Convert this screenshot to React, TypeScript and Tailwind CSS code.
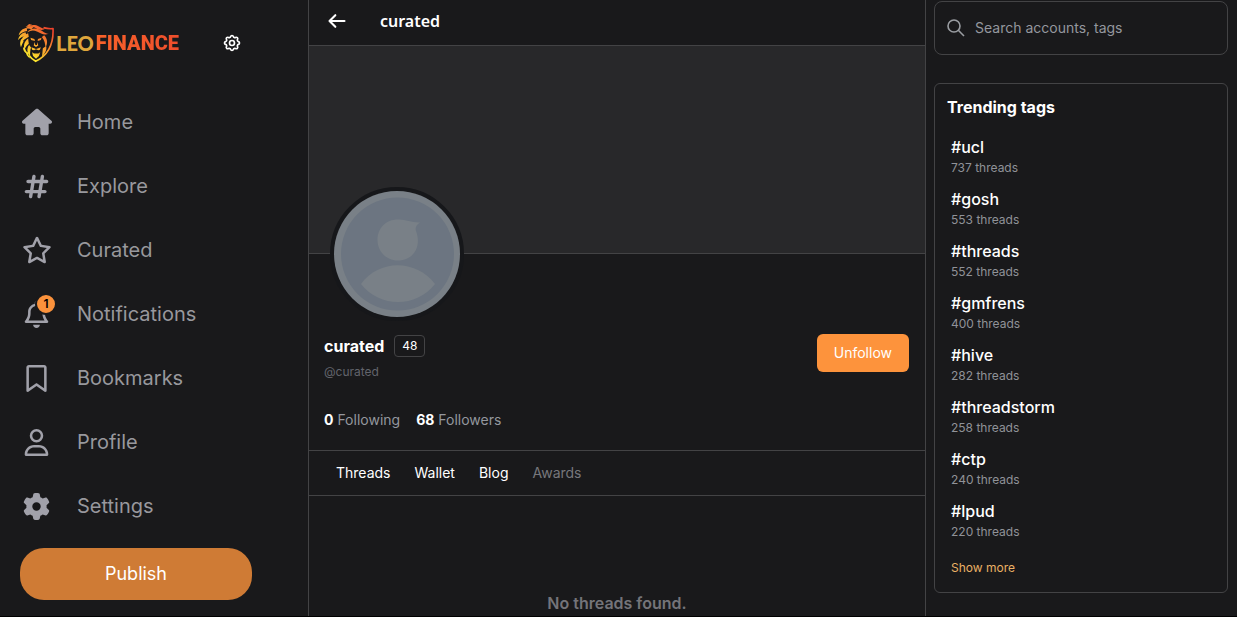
import type { ReactNode } from "react";
import { FaGear, FaHashtag, FaHouse, FaRegBell, FaRegBookmark, FaRegStar, FaRegUser } from "react-icons/fa6";
import { HiOutlineArrowLeft, HiOutlineCog } from "react-icons/hi";

const navItems: { label: string; icon: ReactNode; badge?: number }[] = [
  { label: "Home", icon: <FaHouse className="size-[30px]" /> },
  { label: "Explore", icon: <FaHashtag /> },
  { label: "Curated", icon: <FaRegStar className="size-[30px]" /> },
  { label: "Notifications", icon: <FaRegBell />, badge: 1 },
  { label: "Bookmarks", icon: <FaRegBookmark /> },
  { label: "Profile", icon: <FaRegUser /> },
  { label: "Settings", icon: <FaGear /> },
];

const tags = [
  { name: "ucl", threads: 737 },
  { name: "gosh", threads: 553 },
  { name: "threads", threads: 552 },
  { name: "gmfrens", threads: 400 },
  { name: "hive", threads: 282 },
  { name: "threadstorm", threads: 258 },
  { name: "ctp", threads: 240 },
  { name: "lpud", threads: 220 },
];

const LionMark = () => (
  <svg className="h-10 w-9" viewBox="0 0 110 118" fill="none" aria-hidden="true">
    <defs>
      <linearGradient id="lion" x1="88" y1="8" x2="22" y2="88" gradientUnits="userSpaceOnUse">
        <stop offset="0" stopColor="#f0432c" />
        <stop offset="0.5" stopColor="#f7942f" />
        <stop offset="1" stopColor="#fbe42c" />
      </linearGradient>
    </defs>
    <path
      stroke="url(#lion)"
      strokeWidth="5"
      strokeLinejoin="round"
      d="M78 12c10 3 19 4 29 3 2 43-13 80-53 100-9-5-15-11-20-18"
    />
    <g fill="url(#lion)">
      <path d="M94 31C82 31 76 23 66 18 52 11 36 14 28 27 38 20 48 19 58 24 70 30 80 37 94 31Z" />
      <path d="M84 15C72 16 66 8 56 5 46 2 36 4 28 11 40 8 48 10 55 14 64 19 76 22 84 15Z" />
      <path d="M48 9C38 6 27 8 20 17 27 14 34 14 41 17ZM34 1C30 5 28 7 23 10 31 9 38 7 43 3Z" />
      <path d="M27 14C14 14 5 22 2 36 9 27 17 24 28 22ZM23 26C9 29 3 38 0 50 8 41 15 38 26 37Z" />
      <path d="M31 29C17 34 10 45 9 60 16 50 22 46 33 40ZM11 46C6 53 5 62 9 72 12 64 14 60 17 54Z" />
      <path d="M31 45C20 53 16 65 20 79 24 71 27 66 33 61ZM15 72C15 81 20 88 28 92 25 84 23 79 21 75Z" />
      <path d="M34 65C26 76 27 88 37 99 37 89 37 80 40 73ZM25 84C23 93 28 101 37 106 33 98 31 92 30 88Z" />
      <path d="M80 35C90 46 92 58 84 73 83 63 82 52 73 41ZM86 68C89 80 83 90 73 101 75 90 75 82 76 75Z" />
      <path d="M38 43l12 4 2 6-12-3zM72 43l-11 4-1 6 10-3zM51 56l-3 11 7 4 7-4-3-11-1 9h-5z" />
      <path d="M41 72l8 3 6 2 7-2 8-3-3 8-5 1-7-3-6 3-6-1z" />
      <path d="M43 87l6 4h13l6-4-4 12-9 8-9-8z" />
    </g>
  </svg>
);

const Avatar = () => (
  <svg className="size-full" viewBox="0 0 126 126" role="img" aria-label="curated">
    <circle cx="63" cy="63" r="63" fill="#798087" />
    <circle cx="63.5" cy="63" r="56.5" fill="#6c7581" />
    <path
      fill="#798087"
      d="M64 28.500C71 28 78 32 86 31.500C82 34 81 37 82 40C88 56 79 69.500 64 69.500C52 69.500 43.500 60 43.500 49C43.500 37 52 28.500 64 28.500Z"
    />
    <path fill="#798087" d="M27 93C45 68 82 68 101 93C82 117 46 117 27 93Z" />
  </svg>
);

const Sidebar = () => (
  <aside className="w-[309px] shrink-0 border-r border-[#434345] px-[18px]">
    <div className="flex h-[90px] items-center pb-1">
      <a href="#" className="flex items-center gap-0.5 text-xl font-black">
        <LionMark />
        <span className="flex items-center gap-0.5">
          <span className="font-['Lato',sans-serif] text-[#dfa63c]">LEO</span>
          <span className="bg-linear-to-r from-[#f9622a] to-[#ee4e2c] bg-clip-text font-['Roboto',sans-serif] text-transparent">
            FINANCE
          </span>
        </span>
      </a>
      <button aria-label="Preferences" className="ml-auto mr-12 text-xl">
        <HiOutlineCog />
      </button>
    </div>
    <nav>
      {navItems.map((item) => (
        <a key={item.label} href="#" className="flex h-16 items-center gap-[22px] text-xl text-[#a1a1aa]">
          <span className="relative flex w-[37px] justify-center text-[27px]">
            {item.icon}
            {item.badge && (
              <span className="absolute -top-2 -right-0.5 flex size-[22px] items-center justify-center rounded-full border-2 border-[#19191b] bg-[#fb923c] text-xs font-semibold text-black">
                {item.badge}
              </span>
            )}
          </span>
          <span className="text-[#98989d]">{item.label}</span>
        </a>
      ))}
    </nav>
    <div className="mt-2.5 pl-0.5 pr-[38px]">
      <button className="h-[52px] w-full rounded-3xl bg-[#cf7b35] text-lg text-white">Publish</button>
    </div>
  </aside>
);

const Profile = () => (
  <main className="min-w-0 flex-1">
    <header className="flex h-[46px] items-center gap-[33px] border-b border-[#434345] pb-1 pl-[18px]">
      <button aria-label="Back" className="text-xl">
        <HiOutlineArrowLeft className="[&_path]:stroke-[2.5]" />
      </button>
      <h1 className="font-['Noto_Sans',sans-serif] text-base font-semibold">curated</h1>
    </header>
    <div className="h-52 border-b border-[#434345] bg-[#28282a]" />
    <section className="pl-[15px] pr-4">
      <div className="relative -mt-[67px] ml-1.5 size-[134px] rounded-full border-4 border-[#16171a]">
        <Avatar />
      </div>
      <div className="mt-[13px] flex items-start justify-between">
        <div>
          <div className="flex h-6 items-center gap-2.5">
            <h2 className="text-base font-bold">curated</h2>
            <span className="rounded border border-[#434345] px-[7px] py-0.5 text-xs">48</span>
          </div>
          <p className="mt-1.5 text-xs text-[#62646b]">@curated</p>
        </div>
        <button className="rounded-md bg-[#fd933c] px-[17px] py-[9px] text-sm text-white">Unfollow</button>
      </div>
      <div className="mt-[30px] flex gap-4 pb-5 text-sm text-[#94979e]">
        <a href="#">
          <strong className="text-white">0</strong> Following
        </a>
        <a href="#">
          <strong className="text-white">68</strong> Followers
        </a>
      </div>
    </section>
    <nav className="flex h-[46px] items-center gap-6 border-y border-[#434345] px-[27px] text-sm">
      <a href="#">Threads</a>
      <a href="#">Wallet</a>
      <a href="#">Blog</a>
      <span className="text-[#77777b]">Awards</span>
    </nav>
    <p className="pt-[95px] text-center text-base font-semibold text-[#747479]">No threads found.</p>
  </main>
);

const Trending = () => (
  <aside className="w-[312px] shrink-0 border-l border-[#434345] pl-2 pr-[9px] pt-px">
    <label className="flex h-[54px] items-center gap-2.5 rounded-lg border border-[#434345] px-3">
      <svg
        className="size-[18px] shrink-0 text-[#9a9da2]"
        viewBox="0 0 18 18"
        fill="none"
        stroke="currentColor"
        strokeWidth="1.600"
        aria-hidden="true"
      >
        <circle cx="7" cy="7" r="6" />
        <path d="M11.300 11.300l5.700 5.700" />
      </svg>
      <input
        type="search"
        aria-label="Search"
        placeholder="Search accounts, tags"
        className="min-w-0 flex-1 bg-transparent text-sm outline-none placeholder:text-[#94979e]"
      />
    </label>
    <section className="mt-7 rounded-md border border-[#434345] px-3 pt-[11px] pb-4">
      <h2 className="text-base font-bold">Trending tags</h2>
      <ul className="mt-4 space-y-2.5 px-1">
        {tags.map((tag) => (
          <li key={tag.name}>
            <a href="#" className="block">
              <p className="text-base font-medium">#{tag.name}</p>
              <p className="text-xs leading-[18px] text-[#909298]">{tag.threads} threads</p>
            </a>
          </li>
        ))}
      </ul>
      <button className="mt-[19px] block px-1 text-xs text-[#eab165]">Show more</button>
    </section>
  </aside>
);

const App = () => {
  return (
    <div className="flex min-h-screen border-b border-black bg-[#19191b] font-['Inter',sans-serif] text-white">
      <Sidebar />
      <Profile />
      <Trending />
    </div>
  );
};

export default App;
